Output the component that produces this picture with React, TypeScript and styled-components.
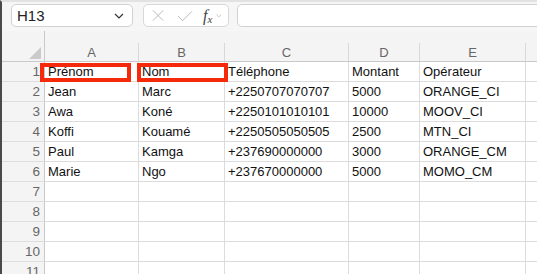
import React from "react";
import styled, { createGlobalStyle } from "styled-components";

const GlobalStyle = createGlobalStyle`
  html, body {
    margin: 0;
    padding: 0;
    background: #ffffff;
    overflow: hidden;
  }
  body {
    font-family: "Liberation Sans", Arial, sans-serif;
  }
`;

const columns = ["A", "B", "C", "D", "E", ""];
const widths = [94, 86, 124, 71, 106];

const rows: string[][] = [
  ["Prénom", "Nom", "Téléphone", "Montant", "Opérateur"],
  ["Jean", "Marc", "+2250707070707", "5000", "ORANGE_CI"],
  ["Awa", "Koné", "+2250101010101", "10000", "MOOV_CI"],
  ["Koffi", "Kouamé", "+2250505050505", "2500", "MTN_CI"],
  ["Paul", "Kamga", "+237690000000", "3000", "ORANGE_CM"],
  ["Marie", "Ngo", "+237670000000", "5000", "MOMO_CM"],
  [],
  [],
  [],
  [],
  [],
];

export default function App() {
  return (
    <>
      <GlobalStyle />
      <Frame>
        <Toolbar>
          <NameBox>
            <NameText>H13</NameText>
            <svg width="10" height="6" viewBox="0 0 10 6">
              <path d="M1 1 L5 5 L9 1" fill="none" stroke="#333" strokeWidth="1.2" />
            </svg>
          </NameBox>
          <FormulaButtons>
            <svg width="13" height="13" viewBox="0 0 13 13">
              <path d="M1 1 L12 12 M12 1 L1 12" stroke="#b4b4b4" strokeWidth="1" />
            </svg>
            <svg width="17" height="12" viewBox="0 0 17 12">
              <path d="M1 6 L6 11 L16 1" fill="none" stroke="#b4b4b4" strokeWidth="1" />
            </svg>
            <Fx>
              <i>f</i>
              <sub>x</sub>
            </Fx>
            <svg width="6" height="4" viewBox="0 0 6 4">
              <path d="M0.5 0.5 L3 3 L5.5 0.5" fill="none" stroke="#bbb" strokeWidth="0.9" />
            </svg>
          </FormulaButtons>
          <FormulaInput />
        </Toolbar>

        <Sheet $widths={widths}>
          <Corner>
            <svg width="12" height="12" viewBox="0 0 12 12">
              <polygon points="12,0 12,12 0,12" fill="#cacaca" />
            </svg>
          </Corner>
          {columns.map((c, i) => (
            <ColHeader key={i}>
              <ColLabel $last={i === columns.length - 1}>{c}</ColLabel>
            </ColHeader>
          ))}
          {rows.map((r, ri) => (
            <React.Fragment key={ri}>
              <RowHeader>{ri + 1}</RowHeader>
              {columns.map((_, ci) => (
                <Cell key={ci} $last={ci === columns.length - 1}>
                  {r[ci] ?? ""}
                </Cell>
              ))}
            </React.Fragment>
          ))}
          <Highlight style={{ left: 38 }} />
          <Highlight style={{ left: 135 }} />
        </Sheet>
      </Frame>
    </>
  );
}

const Frame = styled.div`
  border-left: 2px solid #4a4a4a;
  border-top: 2px solid #e2e2e2;
  height: 272px;
  background: #f6f6f6;
  overflow: hidden;
`;

const Toolbar = styled.div`
  display: flex;
  align-items: flex-start;
  height: 29px;
  padding: 2px 0 0 9px;
  box-sizing: border-box;
`;

const NameBox = styled.div`
  display: flex;
  align-items: center;
  justify-content: space-between;
  width: 122px;
  height: 23px;
  box-sizing: border-box;
  padding: 0 8px 0 5px;
  background: #ffffff;
  border: 1px solid #d2d2d2;
  border-radius: 5px;
  margin-right: 10px;
`;

const NameText = styled.span`
  font-size: 15px;
  color: #222;
`;

const FormulaButtons = styled.div`
  display: flex;
  align-items: center;
  width: 86px;
  height: 23px;
  box-sizing: border-box;
  padding: 0 6px 0 8px;
  gap: 13px;
  background: #ffffff;
  border: 1px solid #d8d8d8;
  border-radius: 5px;
  margin-right: 8px;

  & > svg:last-child {
    margin-left: -9px;
  }
`;

const Fx = styled.span`
  font-family: "Liberation Serif", "Times New Roman", serif;
  font-size: 16px;
  color: #444;
  margin-left: -3px;

  sub {
    font-size: 11px;
    font-style: italic;
    vertical-align: -2px;
  }
`;

const FormulaInput = styled.div`
  flex: 1;
  height: 23px;
  box-sizing: border-box;
  background: #ffffff;
  border: 1px solid #d2d2d2;
  border-radius: 5px;
  margin-right: -8px;
`;

const Sheet = styled.div<{ $widths: number[] }>`
  position: relative;
  display: grid;
  grid-template-columns: 43px ${(p) => p.$widths.map((w) => `${w}px`).join(" ")} 1fr;
  grid-template-rows: 31px;
  grid-auto-rows: 20px;
  background: #ffffff;
`;

const Corner = styled.div`
  display: flex;
  align-items: flex-end;
  justify-content: flex-end;
  padding: 0 3px 2px 0;
  background: #f4f4f4;
  border-right: 1px solid #c9c9c9;
  border-bottom: 1px solid #c9c9c9;
`;

const ColHeader = styled.div`
  display: flex;
  align-items: flex-end;
  background: #f4f4f4;
  border-bottom: 1px solid #c9c9c9;
`;

const ColLabel = styled.div<{ $last?: boolean }>`
  flex: 1;
  height: 18px;
  line-height: 19px;
  text-align: center;
  font-size: 13px;
  color: #666;
  border-right: ${(p) => (p.$last ? "none" : "1px solid #d8d8d8")};
`;

const RowHeader = styled.div`
  background: #f4f4f4;
  border-right: 1px solid #c9c9c9;
  border-bottom: 1px solid #dedede;
  text-align: right;
  padding-right: 4px;
  font-size: 13.5px;
  line-height: 20px;
  color: #666;
`;

const Cell = styled.div<{ $last?: boolean }>`
  border-right: ${(p) => (p.$last ? "none" : "1px solid #dcdcdc")};
  border-bottom: 1px solid #dcdcdc;
  padding-left: 3px;
  font-size: 13px;
  line-height: 20px;
  color: #111;
  white-space: nowrap;
  overflow: hidden;
`;

const Highlight = styled.div`
  position: absolute;
  top: 32px;
  width: 91px;
  height: 19px;
  box-sizing: border-box;
  border: 4px solid #f52a0a;
  pointer-events: none;
`;
